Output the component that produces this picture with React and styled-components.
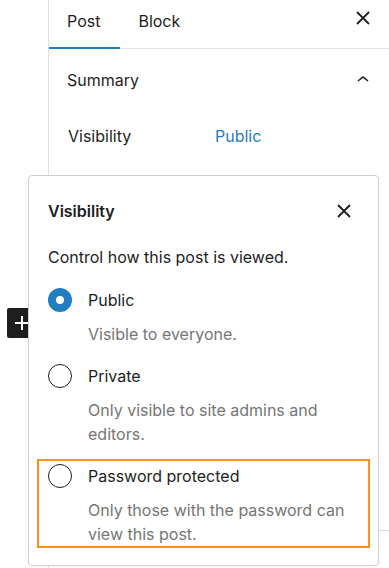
import React from "react";
import styled, { createGlobalStyle } from "styled-components";

const BLUE = "#1f7dc0";

const GlobalStyle = createGlobalStyle`
  html, body {
    margin: 0;
    padding: 0;
    background: #fff;
  }
  body {
    font-family: Inter, "Noto Sans", "Liberation Sans", sans-serif;
    color: #1e1e1e;
    -webkit-font-smoothing: antialiased;
  }
  * {
    box-sizing: border-box;
  }
`;

const Page = styled.div`
  position: relative;
  width: 389px;
  height: 568px;
  overflow: hidden;
  display: flex;
`;

const Canvas = styled.div`
  width: 48px;
  flex-shrink: 0;
  padding: 308px 0 0 7px;
`;

const InserterButton = styled.div`
  width: 28px;
  height: 30px;
  background: #1e1e1e;
  border-radius: 2px;
  display: flex;
  align-items: center;
  justify-content: center;
  padding-left: 1px;
`;

const Sidebar = styled.aside`
  flex: 1;
  border-left: 1px solid #e0e0e0;
  display: flex;
  flex-direction: column;
`;

const TabBar = styled.div`
  height: 49px;
  border-bottom: 1px solid #e0e0e0;
  display: flex;
  align-items: stretch;
`;

const Tab = styled.div`
  position: relative;
  padding: 0 20px 6px 18px;
  display: flex;
  align-items: center;
  font-size: 16px;
  color: #1e1e1e;
  height: 48px;

  &::after {
    content: "";
    position: absolute;
    left: 0;
    right: 0;
    bottom: -1px;
    height: 2px;
    background: ${(p) => (p.$active ? BLUE : "transparent")};
  }
`;

const IconButton = styled.div`
  width: 36px;
  height: 36px;
  display: flex;
  align-items: center;
  justify-content: center;
  margin-left: ${(p) => (p.$auto ? "auto" : "0")};
  margin-right: ${(p) => p.$right || 0}px;
  align-self: ${(p) => (p.$top ? "flex-start" : "center")};
  color: #1e1e1e;
`;

const Panel = styled.section`
  border-bottom: 1px solid #e0e0e0;
  padding: 0 0 0 18px;
  height: 482px;
`;

const PanelHeader = styled.div`
  height: 60px;
  display: flex;
  align-items: center;
  font-size: 16px;
  font-weight: 400;
  padding-top: 2px;
`;

const PanelRow = styled.div`
  display: flex;
  align-items: center;
  height: 36px;
  margin-top: 9px;
  font-size: 16px;
`;

const RowLabel = styled.div`
  width: 148px;
  padding-left: 1px;
`;

const RowValue = styled.div`
  color: ${BLUE};
`;

const Popover = styled.div`
  position: absolute;
  left: 28px;
  top: 175px;
  width: 351px;
  height: 391px;
  background: #fff;
  border: 1px solid #cfcfcf;
  border-radius: 4px;
  box-shadow: 0 2px 6px rgba(0, 0, 0, 0.04);
  padding: 17px 16px 0 19px;
`;

const PopoverHeader = styled.div`
  display: flex;
  align-items: center;
  justify-content: space-between;
  height: 36px;
`;

const PopoverTitle = styled.h2`
  margin: 0;
  font-size: 16px;
  font-weight: 600;
`;

const Intro = styled.p`
  margin: 16px 0 19px;
  font-size: 16px;
  line-height: 24px;
`;

const OptionList = styled.div`
  display: flex;
  flex-direction: column;
  gap: 18px;
`;

const Option = styled.div`
  ${(p) =>
    p.$highlight &&
    `
    border: 2px solid #f7921e;
    margin: -5px -8px -1px -11px;
    padding: 3px 0 0 9px;
  `}
`;

const OptionRow = styled.label`
  display: flex;
  align-items: center;
  gap: 16px;
  height: 24px;
  font-size: 16px;
`;

const Radio = styled.span`
  width: 24px;
  height: 24px;
  flex-shrink: 0;
  border-radius: 50%;
  background: #fff;
  border: ${(p) => (p.$checked ? `8px solid ${BLUE}` : "1px solid #1e1e1e")};
`;

const OptionHelp = styled.div`
  margin-top: 10px;
  padding-left: 40px;
  font-size: 16px;
  line-height: 24px;
  color: #757575;
`;

const CloseIcon = () => (
  <svg width="24" height="24" viewBox="0 0 24 24" stroke="currentColor" strokeWidth="1.8" fill="none">
    <path d="M6 6l12 12M18 6L6 18" />
  </svg>
);

const ChevronUp = () => (
  <svg width="24" height="24" viewBox="0 0 24 24" fill="currentColor">
    <path d="M6.5 12.4L12 8l5.5 4.4-.9 1.2L12 10l-4.6 3.6-1-1.2z" />
  </svg>
);

const PlusIcon = () => (
  <svg width="16" height="16" viewBox="0 0 16 16" stroke="#fff" strokeWidth="2" fill="none">
    <path d="M8 1v14M1 8h14" />
  </svg>
);

const options = [
  { label: "Public", help: "Visible to everyone.", checked: true },
  { label: "Private", help: "Only visible to site admins and editors." },
  {
    label: "Password protected",
    help: "Only those with the password can view this post.",
    highlight: true,
  },
];

export default function App() {
  return (
    <>
      <GlobalStyle />
      <Page>
        <Canvas>
          <InserterButton>
            <PlusIcon />
          </InserterButton>
        </Canvas>
        <Sidebar>
          <TabBar>
            <Tab $active>Post</Tab>
            <Tab>Block</Tab>
            <IconButton $auto $right={8} $top>
              <CloseIcon />
            </IconButton>
          </TabBar>
          <Panel>
            <PanelHeader>
              Summary
              <IconButton $auto $right={8}>
                <ChevronUp />
              </IconButton>
            </PanelHeader>
            <PanelRow>
              <RowLabel>Visibility</RowLabel>
              <RowValue>Public</RowValue>
            </PanelRow>
          </Panel>
        </Sidebar>

        <Popover>
          <PopoverHeader>
            <PopoverTitle>Visibility</PopoverTitle>
            <IconButton>
              <CloseIcon />
            </IconButton>
          </PopoverHeader>
          <Intro>Control how this post is viewed.</Intro>
          <OptionList>
            {options.map((o) => (
              <Option key={o.label} $highlight={o.highlight}>
                <OptionRow>
                  <Radio $checked={o.checked} />
                  {o.label}
                </OptionRow>
                <OptionHelp>{o.help}</OptionHelp>
              </Option>
            ))}
          </OptionList>
        </Popover>
      </Page>
    </>
  );
}
